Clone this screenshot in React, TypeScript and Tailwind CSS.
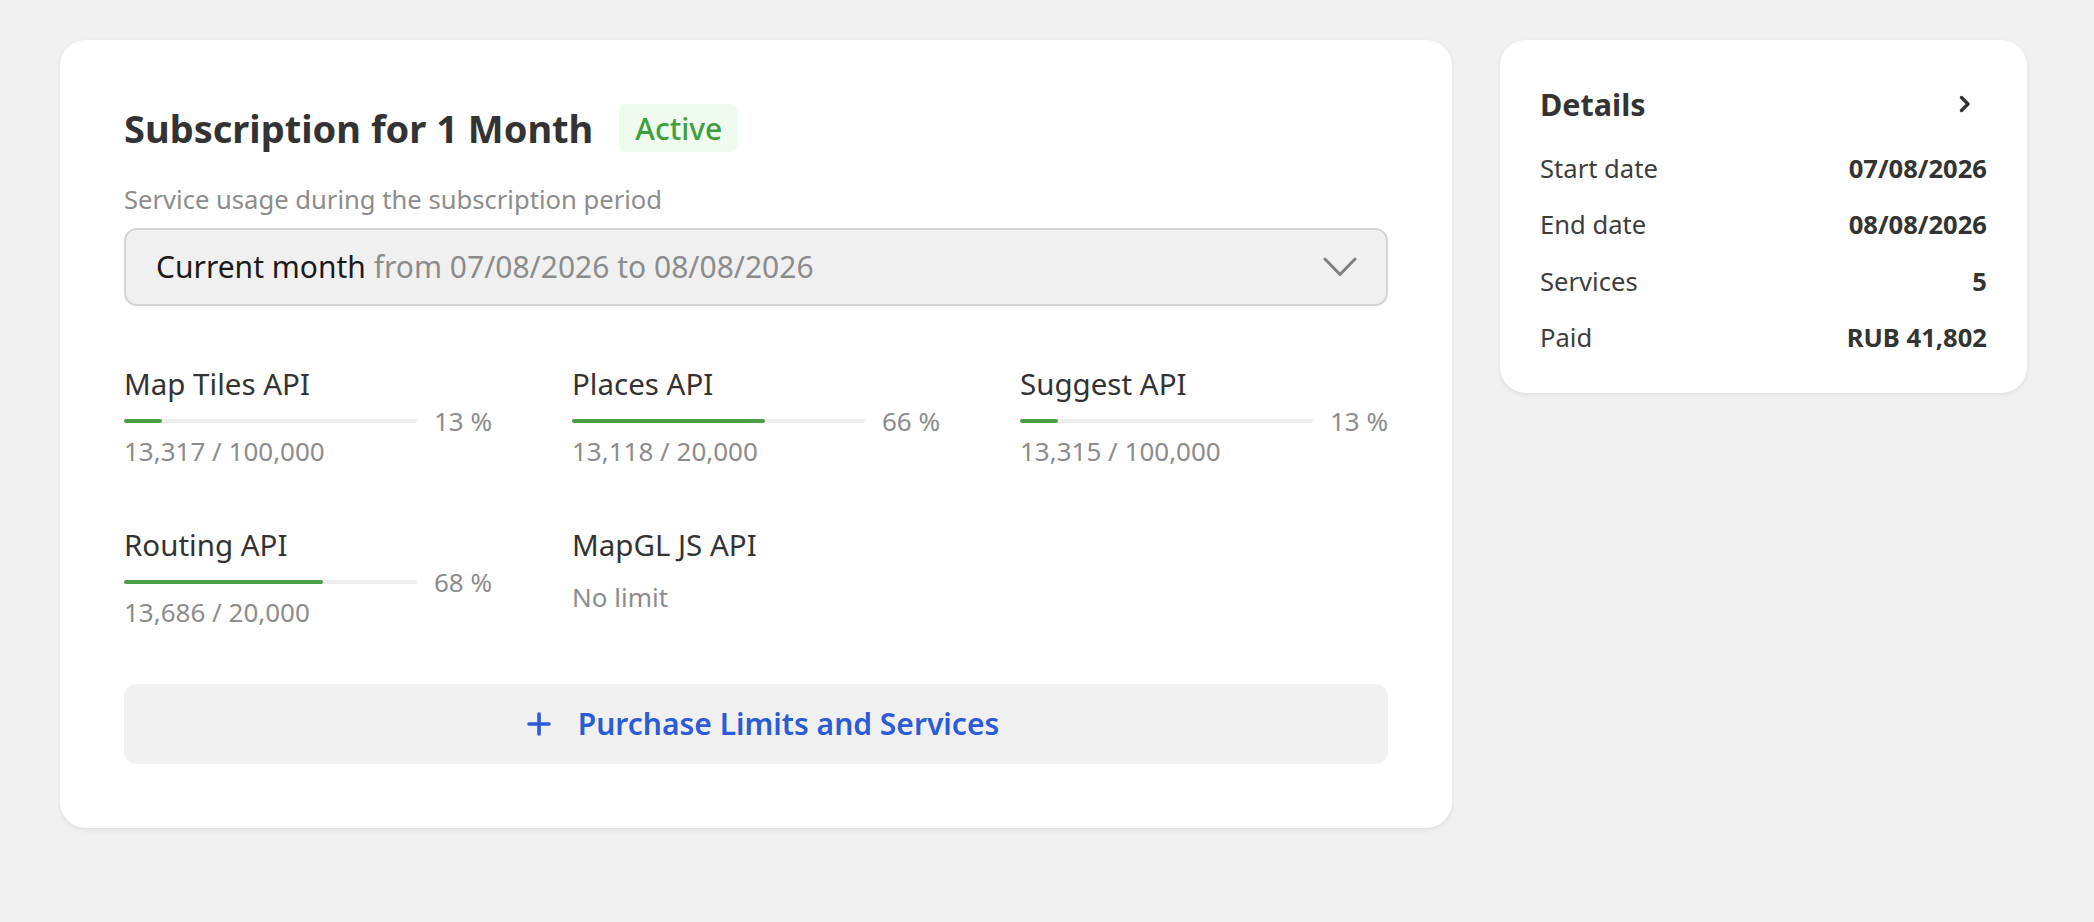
import React from "react";

type Service = {
  name: string;
  used?: string;
  limit?: string;
  pct?: number;
};

const services: Service[] = [
  { name: "Map Tiles API", used: "13,317", limit: "100,000", pct: 13 },
  { name: "Places API", used: "13,118", limit: "20,000", pct: 66 },
  { name: "Suggest API", used: "13,315", limit: "100,000", pct: 13 },
  { name: "Routing API", used: "13,686", limit: "20,000", pct: 68 },
  { name: "MapGL JS API" },
];

function ServiceItem({ s }: { s: Service }) {
  return (
    <div className="flex flex-col">
      <div className="text-[29.5px] leading-[40px] text-[#333333]">{s.name}</div>
      {s.pct !== undefined ? (
        <>
          <div className="flex h-[33px] items-center gap-[17px]">
            <div className="relative h-[4px] flex-1 rounded-full bg-[#eeeeee]">
              <div
                className="absolute left-0 top-0 h-full rounded-full bg-[#4a9e44]"
                style={{ width: `${s.pct}%` }}
              />
            </div>
            <div className="shrink-0 whitespace-nowrap text-right text-[26px] leading-[34px] text-[#8c8c8c]">
              {s.pct} %
            </div>
          </div>
          <div className="-mt-[3px] text-[26px] leading-[34px] text-[#8c8c8c]">
            {s.used} / {s.limit}
          </div>
        </>
      ) : (
        <div className="mt-[15px] text-[26px] leading-[34px] text-[#8c8c8c]">No limit</div>
      )}
    </div>
  );
}

function DetailRow({ label, value }: { label: string; value: string }) {
  return (
    <div className="flex h-[34px] items-center justify-between">
      <span className="text-[25.6px] leading-[34px] text-[#3d3d3d]">{label}</span>
      <span className="text-[25.6px] font-bold leading-[34px] text-[#333333]">{value}</span>
    </div>
  );
}

export default function App() {
  return (
    <div className="min-h-screen bg-[#f1f1f1] pl-[60px] pt-[40px] font-['Noto_Sans',sans-serif]">
      <div className="flex items-start gap-[48px]">
        {/* Main card */}
        <div className="w-[1392px] rounded-[26px] bg-white p-[64px] shadow-[0_2px_5px_rgba(0,0,0,0.08)]">
          <div className="flex items-center gap-[26px]">
            <h1 className="text-[38px] font-bold leading-[48px] text-[#333333]">
              Subscription for 1 Month
            </h1>
            <div className="flex h-[48px] items-center rounded-[7px] bg-[#f0fbf0] px-[16px] text-[30px] font-medium text-[#3f9f3c]">
              Active
            </div>
          </div>

          <div className="mt-[31px] text-[25.6px] leading-[34px] text-[#8c8c8c]">
            Service usage during the subscription period
          </div>

          <div className="mt-[11px] flex h-[78px] items-center justify-between rounded-[13px] border-2 border-[#d3d3d3] bg-[#f0f0f0] pl-[30px] pr-[29px]">
            <div className="text-[30px] leading-[40px]">
              <span className="text-[#1a1a1a]">Current month</span>{" "}
              <span className="text-[#8c8c8c]">from 07/08/2026 to 08/08/2026</span>
            </div>
            <svg width="34" height="20" viewBox="0 0 34 20" fill="none">
              <polyline
                points="2,2 17,17.5 32,2"
                stroke="#808080"
                strokeWidth="3"
                strokeLinecap="round"
                strokeLinejoin="round"
              />
            </svg>
          </div>

          <div className="mt-[58px] grid grid-cols-3 gap-x-[80px] gap-y-[57px]">
            {services.map((s) => (
              <ServiceItem key={s.name} s={s} />
            ))}
          </div>

          <button className="mt-[55px] flex h-[80px] w-full items-center justify-center gap-[27px] rounded-[13px] bg-[#f0f0f0] pl-[14px] text-[#2b5bd6]">
            <svg width="24" height="24" viewBox="0 0 24 24" fill="none">
              <path
                d="M12 2v20M2 12h20"
                stroke="#2b5bd6"
                strokeWidth="3.6"
                strokeLinecap="round"
              />
            </svg>
            <span className="text-[30px] font-semibold leading-[40px]">
              Purchase Limits and Services
            </span>
          </button>
        </div>

        {/* Details card */}
        <div className="w-[527px] rounded-[26px] bg-white px-[40px] pb-[38px] pt-[40px] shadow-[0_2px_5px_rgba(0,0,0,0.08)]">
          <div className="flex h-[48px] items-center justify-between">
            <span className="text-[30.5px] font-bold leading-[48px] text-[#333333]">Details</span>
            <svg width="12" height="18" viewBox="0 0 12 18" fill="none" className="mr-[16px]">
              <polyline
                points="2.5,2.5 9,9 2.5,15.5"
                stroke="#333333"
                strokeWidth="3.4"
                strokeLinecap="round"
                strokeLinejoin="round"
              />
            </svg>
          </div>
          <div className="mt-[24px] flex flex-col gap-[22.3px]">
            <DetailRow label="Start date" value="07/08/2026" />
            <DetailRow label="End date" value="08/08/2026" />
            <DetailRow label="Services" value="5" />
            <DetailRow label="Paid" value="RUB 41,802" />
          </div>
        </div>
      </div>
    </div>
  );
}
